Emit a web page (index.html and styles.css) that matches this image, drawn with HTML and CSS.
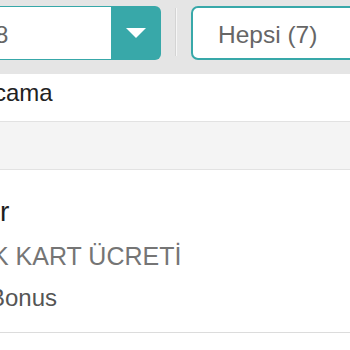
FILE: index.html
```html
<!DOCTYPE html>
<html lang="tr">
<head>
<meta charset="utf-8">
<title>Kart ücretleri</title>
<link rel="stylesheet" href="styles.css">
</head>
<body>
<div class="screen">
  <div class="filters">
    <div class="select select-city">
      <div class="select-field"><span class="select-value">8</span></div>
      <div class="select-btn">
        <svg width="20" height="10" viewBox="0 0 20 10"><path d="M0 0H20L10 10Z" fill="#fff"/></svg>
      </div>
    </div>
    <div class="divider"></div>
    <div class="select select-filter"><span class="select-value">Hepsi (7)</span></div>
  </div>
  <div class="row-sum"><span class="row-text">cama</span></div>
  <div class="section"></div>
  <div class="item">
    <div class="item-title">r</div>
    <div class="item-sub">K KART ÜCRETİ</div>
    <div class="item-bank">Bonus</div>
  </div>
</div>
</body>
</html>
```
FILE: styles.css
```css
html, body {
  margin: 0;
  padding: 0;
  background: #fff;
  overflow: hidden;
}
.screen {
  width: 350px;
  height: 350px;
  overflow: hidden;
  font-family: "Liberation Sans", Arial, sans-serif;
}
.filters {
  height: 74px;
  box-sizing: border-box;
  background: #e5e5e5;
  padding-top: 6px;
  display: flex;
  align-items: flex-start;
}
.select-city {
  display: flex;
  flex: 0 0 261px;
  height: 54px;
  margin-left: -100px;
}
.select-field {
  flex: 1;
  box-sizing: border-box;
  background: #fff;
  border: 1px solid #38a8a9;
  border-right: none;
  border-radius: 6px 0 0 6px;
  padding: 4px 0 0 94px;
  font-size: 24px;
  line-height: 48px;
  color: #666;
  white-space: nowrap;
}
.select-btn {
  flex: 0 0 50px;
  background: #38a8a9;
  border-radius: 0 6px 6px 0;
  display: flex;
  align-items: center;
  justify-content: center;
}
.select-btn svg {
  display: block;
  margin-top: -1px;
}
.divider {
  flex: 0 0 1px;
  height: 48px;
  margin: 2px 14px 0 14px;
  border-left: 1px solid #d4d4d4;
  background: #f6f6f6;
}
.select-filter {
  flex: 0 0 200px;
  box-sizing: border-box;
  height: 54px;
  background: #fff;
  border: 2px solid #38a8a9;
  border-radius: 7px;
  padding: 3px 0 0 25px;
  font-size: 24.5px;
  line-height: 47px;
  color: #666;
  white-space: nowrap;
}
.row-sum {
  height: 48px;
  box-sizing: border-box;
  padding: 5px 0 0 0;
  border-bottom: 1px solid #e2e2e2;
  font-size: 24px;
  line-height: 28px;
  color: #222;
  white-space: nowrap;
}
.row-text {
  display: inline-block;
  margin-left: -6px;
}
.section {
  height: 47px;
  background: #f4f4f4;
  border-bottom: 1px solid #e2e2e2;
}
.item {
  padding: 25px 0 20px 0;
  border-bottom: 1px solid #dcdcdc;
  white-space: nowrap;
}
.item-title {
  font-size: 28px;
  line-height: 34px;
  color: #1e1e1e;
}
.item-sub {
  margin: 12px 0 0 -8px;
  font-size: 25px;
  line-height: 30px;
  color: #757575;
}
.item-bank {
  margin: 13px 0 0 -11px;
  font-size: 24px;
  line-height: 28px;
  color: #555;
}
```
